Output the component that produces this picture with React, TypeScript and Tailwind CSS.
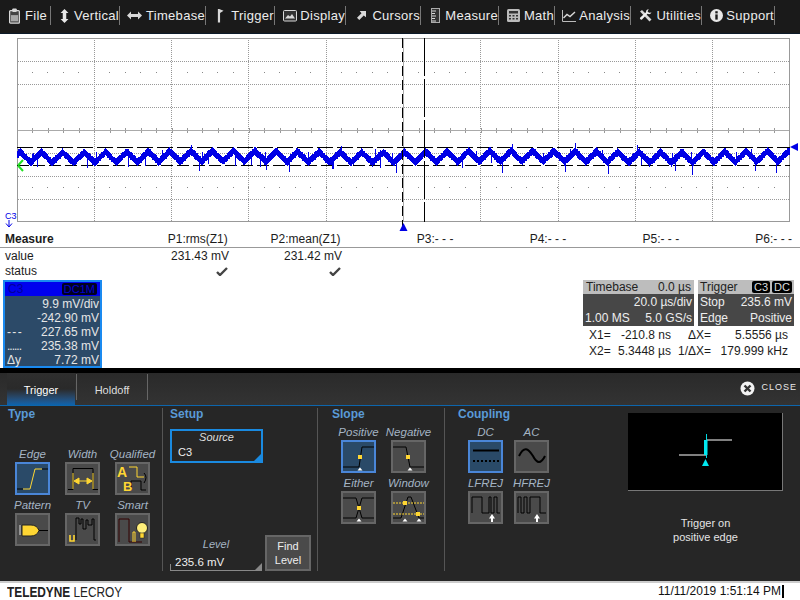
import type { ReactNode } from "react";

const rand = (n: number) => {
  const v = Math.sin(n * 12.9898) * 43758.5453;
  return v - Math.floor(v);
};

function tracePath() {
  let d = "";
  for (let x = 17; x <= 789; x += 1) {
    const period = 21.35;
    const p = (((x - 41) % period) + period) % period;
    const tri = p < period / 2 ? p / (period / 2) : 2 - p / (period / 2);
    const drift = Math.sin(x / 47) * 0.7;
    const mid = 151.5 + tri * 10.5 + drift;
    let top = mid - 3.2 - rand(x) * 1.2;
    let bot = mid + 3.2 + rand(x + 900) * 1.2;
    if (rand(x + 300) > 0.975) bot += 5 + rand(x + 50) * 5;
    if (rand(x + 600) > 0.98) top -= 3 + rand(x + 70) * 3;
    d += `M${x + 0.5} ${top.toFixed(0)}V${bot.toFixed(0)}`;
  }
  return d;
}

function Screen() {
  const vx = [94, 171, 248, 326, 480, 558, 635, 712];
  const hy = [61, 84, 107, 153, 176, 199];
  const dots: ReactNode[] = [];
  for (const y of [72, 187]) {
    for (let i = 0; i < 50; i++) {
      const x = 32 + i * 15.45;
      dots.push(<rect key={`${y}-${i}`} x={Math.round(x)} y={y} width="1" height="1" fill="#888" />);
    }
  }
  const ticks: ReactNode[] = [];
  for (let i = 0; i < 50; i++) {
    const x = Math.round(17 + i * 15.45);
    ticks.push(<rect key={i} x={x} y={128} width="1" height="5" fill="#999" />);
  }
  return (
    <svg width="800" height="198" viewBox="0 34 800 198" className="block shrink-0" shapeRendering="crispEdges">
      {hy.map((y) => (
        <line key={y} x1="18" x2="789" y1={y + 0.5} y2={y + 0.5} stroke="#999" strokeDasharray="1 1" />
      ))}
      {vx.map((x) => (
        <line key={x} x1={x + 0.5} x2={x + 0.5} y1="38" y2="221" stroke="#999" strokeDasharray="1 1" />
      ))}
      {dots}
      {ticks}
      <line x1="18" x2="789" y1="130.5" y2="130.5" stroke="#aaa" />
      <line x1="403.5" x2="403.5" y1="38" y2="221" stroke="#aaa" />
      <rect x="17.5" y="38.5" width="772" height="183" fill="none" stroke="#999" />
      <line x1="17" x2="790" y1="147.5" y2="147.5" stroke="#000" strokeDasharray="16 4" />
      <line x1="17" x2="790" y1="165.5" y2="165.5" stroke="#000" strokeDasharray="12 4" />
      <path d={tracePath()} stroke="#0000e6" strokeWidth="1" fill="none" />
      <line x1="402.5" x2="402.5" y1="38" y2="226" stroke="#000" strokeDasharray="10 4" />
      <line x1="424.5" x2="424.5" y1="38" y2="222" stroke="#000" strokeDasharray="38 3" />
      <path d="M18 165.5L23 160M18 165.5L23 171" stroke="#22e022" strokeWidth="2" fill="none" shapeRendering="auto" />
      <path d="M790 147L798 143V151Z" fill="#0000e6" shapeRendering="auto" />
      <path d="M403.5 223L407.5 231H399.5Z" fill="#0000e6" shapeRendering="auto" />
      <text x="5" y="219" fontSize="9" fill="#0000e6" fontFamily="Liberation Sans">C3</text>
      <path d="M9 220V226M6 223.5L9 227L12 223.5" stroke="#0000e6" fill="none" shapeRendering="auto" />
    </svg>
  );
}

function MenuIcon({ name }: { name: string }) {
  const c = "#d8d8d8";
  switch (name) {
    case "File":
      return (
        <svg width="13" height="16" viewBox="0 0 14 18">
          <rect x="1.5" y="3" width="11" height="14" rx="1" fill="#444" stroke={c} strokeWidth="1.4" />
          <rect x="3" y="8" width="8" height="7" fill="#a8a8a8" />
          <rect x="4.5" y="0.5" width="5" height="4" rx="1" fill={c} />
        </svg>
      );
    case "Vertical":
      return (
        <svg width="9" height="14" viewBox="0 0 10 16">
          <path d="M5 0L9.5 4.5H7V11.5H9.5L5 16L0.5 11.5H3V4.5H0.5Z" fill="#e8e8e8" />
        </svg>
      );
    case "Timebase":
      return (
        <svg width="15" height="9" viewBox="0 0 15 9">
          <path d="M0 4.5L4 0.5V3H11V0.5L15 4.5L11 8.5V6H4V8.5Z" fill={c} />
        </svg>
      );
    case "Trigger":
      return (
        <svg width="7" height="14" viewBox="0 0 8 16">
          <path d="M1 0H2.5L7.5 2L3.5 4.5V15.5H1Z" fill={c} />
        </svg>
      );
    case "Display":
      return (
        <svg width="14" height="12" viewBox="0 0 14 12">
          <rect x="0.5" y="0.5" width="13" height="10.5" rx="1" fill="#333" stroke={c} />
          <path d="M2 8.5L5 5L7 6.5L9 4L12 8.5Z" fill={c} />
        </svg>
      );
    case "Cursors":
      return (
        <svg width="9" height="9" viewBox="0 0 10 10">
          <path d="M10 0V7L7.5 5L2.5 10L0 7.5L5 2.5L3 0Z" fill={c} />
        </svg>
      );
    case "Measure":
      return (
        <svg width="9" height="15" viewBox="0 0 9 15">
          <rect x="0.5" y="0.5" width="8" height="14" fill="#333" stroke="#aaa" />
          <path d="M1 3H5M1 5.5H4M1 8H5M1 10.5H4M1 13H5" stroke={c} />
        </svg>
      );
    case "Math":
      return (
        <svg width="13" height="13" viewBox="0 0 13 13">
          <rect width="13" height="13" rx="1.5" fill="#bbb" />
          <rect x="2" y="2" width="9" height="2.5" fill="#333" />
          <path d="M2 6H4V7.5H2ZM5.5 6H7.5V7.5H5.5ZM9 6H11V7.5H9ZM2 9H4V10.5H2ZM5.5 9H7.5V10.5H5.5ZM9 9H11V10.5H9Z" fill="#333" />
        </svg>
      );
    case "Analysis":
      return (
        <svg width="14" height="12" viewBox="0 0 14 12">
          <path d="M0.5 0V11.5H14" stroke="#bbb" fill="none" />
          <path d="M1.5 8L5 4.5L8 6.5L13 2" stroke={c} strokeWidth="1.4" fill="none" />
        </svg>
      );
    case "Utilities":
      return (
        <svg width="13" height="13" viewBox="0 0 13 13">
          <path d="M1 2.5L3 1L12.5 10.5L10.5 12.5Z" fill={c} />
          <path d="M12.5 3.5A3 3 0 0 1 8.5 4.8L3 10.5A1.4 1.4 0 0 1 1 8.8L7 3.2A3 3 0 0 1 9.8 0.2L8.5 2.2L10 3.8Z" fill="#eee" />
        </svg>
      );
    default:
      return (
        <svg width="13" height="13" viewBox="0 0 13 13">
          <circle cx="6.5" cy="6.5" r="6.5" fill="#e8e8e8" />
          <rect x="5.3" y="2.2" width="2.4" height="2.2" fill="#1a1a1a" />
          <rect x="5.3" y="5.4" width="2.4" height="5.2" fill="#1a1a1a" />
        </svg>
      );
  }
}

const menuItems: [string, string, string][] = [
  ["File", "w-[51px] pl-[7px]", "w-[15px]"],
  ["Vertical", "w-[69px] pl-[7px]", "w-[18px]"],
  ["Timebase", "w-[86px] pl-[6px]", "w-[19px]"],
  ["Trigger", "w-[69px] pl-[6px]", "w-[20px]"],
  ["Display", "w-[71px] pl-[7px]", "w-[19px]"],
  ["Cursors", "w-[75px] pl-[8px]", "w-[17px]"],
  ["Measure", "w-[78px] pl-[8px]", "w-[18px]"],
  ["Math", "w-[56px] pl-[7px]", "w-[19px]"],
  ["Analysis", "w-[76px] pl-[7px]", "w-[19px]"],
  ["Utilities", "w-[71px] pl-[7px]", "w-[19px]"],
  ["Support", "w-[73px] pl-[7px]", "w-[19px]"],
];

function MenuBar() {
  return (
    <div className="flex h-[34px] shrink-0 items-center bg-[#1a1a1a] border-b border-[#0c1a28] pb-[2px]">
      {menuItems.map(([name, cls, iconCls]) => (
        <div key={name} className={`flex h-[19px] items-center border-r border-[#777] ${cls}`}>
          <span className={`flex justify-center mr-[3px] ${iconCls}`}>
            <MenuIcon name={name} />
          </span>
          <span className="text-[13px] tracking-[0.3px] text-[#ececec]">{name}</span>
        </div>
      ))}
    </div>
  );
}

function Check() {
  return (
    <svg width="12" height="9" viewBox="0 0 12 9">
      <path d="M1 5L4 8L11 1" stroke="#444" strokeWidth="2.4" fill="none" />
    </svg>
  );
}

function MeasureTable() {
  const cols = ["P1:rms(Z1)", "P2:mean(Z1)", "P3:- - -", "P4:- - -", "P5:- - -", "P6:- - -"];
  return (
    <div className="shrink-0 text-[12px] leading-[15px] text-[#1c1c1c]">
      <div className="flex h-[16px] border-b border-[#999] pr-[8px]">
        <div className="w-[115px] pl-[5px] font-bold">Measure</div>
        {cols.map((c) => (
          <div key={c} className="w-[113px] text-right">{c}</div>
        ))}
      </div>
      <div className="flex h-[16px] items-center">
        <div className="w-[115px] pl-[5px]">value</div>
        <div className="w-[114px] text-right">231.43 mV</div>
        <div className="w-[113px] text-right">231.42 mV</div>
      </div>
      <div className="flex h-[15px] items-center">
        <div className="w-[115px] pl-[5px]">status</div>
        <div className="flex w-[113px] justify-end"><Check /></div>
        <div className="flex w-[113px] justify-end"><Check /></div>
      </div>
    </div>
  );
}

function Pill({ children }: { children: ReactNode }) {
  return <span className="rounded-[2px] bg-black px-[2px] leading-[12px] text-[11px] text-[#ddd]">{children}</span>;
}

function ChannelBox() {
  const rows: [ReactNode, string][] = [
    ["", "9.9 mV/div"],
    ["", "-242.90 mV"],
    [<span key="a" className="tracking-[-1px]">- - -</span>, "227.65 mV"],
    [<span key="b" className="tracking-[-1px]">......</span>, "235.38 mV"],
    ["Δy", "7.72 mV"],
  ];
  return (
    <div className="ml-[3px] h-[88px] w-[99px] border-2 border-[#1a8af0] bg-[#2c4a68] text-[12px] text-[#e6e6e6]">
      <div className="flex h-[14px] items-center justify-between bg-[#0000ee] pl-[3px] pr-[3px] text-[#00009a]">
        <span>C3</span>
        <span className="rounded-[2px] bg-[#000020] px-[2px] text-[11px] leading-[12px] text-[#0000d0]">DC1M</span>
      </div>
      <div className="pt-[1px]">
        {rows.map(([l, v], i) => (
          <div key={i} className="flex h-[14px] items-center justify-between pl-[2px] pr-[1px] leading-[14px]">
            <span>{l}</span>
            <span>{v}</span>
          </div>
        ))}
      </div>
    </div>
  );
}

function InfoBoxes() {
  return (
    <div className="w-[211px] text-[12px]">
      <div className="flex justify-between">
        <div className="w-[111px]">
          <div className="flex h-[14px] items-center justify-between bg-[#bdbdbd] px-[3px] text-[#222]">
            <span>Timebase</span>
            <span>0.0 µs</span>
          </div>
          <div className="h-[32px] bg-[#474747] px-[2px] leading-[16px] text-[#eee]">
            <div className="text-right">20.0 µs/div</div>
            <div className="flex justify-between"><span>1.00 MS</span><span>5.0 GS/s</span></div>
          </div>
        </div>
        <div className="w-[96px]">
          <div className="flex h-[14px] items-center justify-between bg-[#bdbdbd] px-[2px] text-[#222]">
            <span>Trigger</span>
            <span className="flex gap-[2px]"><Pill>C3</Pill><Pill>DC</Pill></span>
          </div>
          <div className="h-[32px] bg-[#474747] px-[2px] leading-[16px] text-[#eee]">
            <div className="flex justify-between"><span>Stop</span><span>235.6 mV</span></div>
            <div className="flex justify-between"><span>Edge</span><span>Positive</span></div>
          </div>
        </div>
      </div>
      <div className="grid grid-cols-[22px_60px_40px_77px] pl-[6px] pt-[1px] leading-[16px] text-[#1c1c1c]">
        <span>X1=</span>
        <span className="text-right">-210.8 ns</span>
        <span className="text-right">ΔX=</span>
        <span className="text-right">5.5556 µs</span>
        <span>X2=</span>
        <span className="text-right">5.3448 µs</span>
        <span className="text-right">1/ΔX=</span>
        <span className="text-right">179.999 kHz</span>
      </div>
    </div>
  );
}

function IconBtn({ label, active, children }: { label: string; active?: boolean; children: ReactNode }) {
  return (
    <div className="flex h-[51px] w-[35px] flex-col items-center">
      <div className="h-[18px] whitespace-nowrap text-[11.5px] italic leading-[20px] text-[#a4b4c4]">{label}</div>
      <div className={`h-[33px] w-[35px] border-2 ${active ? "border-[#4a86d8] bg-[#2a4a68]" : "border-[#666] bg-[#4a4a4a]"}`}>
        <svg width="31" height="29" viewBox="0 0 31 29" className="block overflow-visible">
          {children}
        </svg>
      </div>
    </div>
  );
}

const Y = "#ffd633";
const mark = (x: number, y: number) => <rect x={x - 2} y={y - 2} width="4" height="4" fill={Y} />;
const tri = (x: number) => <path d={`M${x} 25.5L${x + 2.5} 28.5H${x - 2.5}Z`} fill="#fff" />;
const rejArrow = (x: number) => <path d={`M${x} 21L${x + 3} 25.5H${x + 1}V29H${x - 1}V25.5H${x - 3}Z`} fill="#fff" />;

function TypeGrid() {
  return (
    <div className="mt-[24px] grid w-[162px] grid-cols-[35px_35px_35px] gap-x-[15px] pl-[15px]">
      <IconBtn label="Edge" active>
        <path d="M0 25H6" stroke="#000" strokeWidth="1" fill="none" />
        <path d="M6 25H13L18 5H25" stroke={Y} fill="none" />
        <path d="M25 5H31" stroke="#000" fill="none" />
      </IconBtn>
      <IconBtn label="Width">
        <path d="M1 25.5H6V4.5H26V25.5H31" stroke="#000" fill="none" />
        <path d="M6 9V25M26 9V25" stroke={Y} fill="none" />
        <path d="M7 17L12 14V20ZM25 17L20 14V20Z M12 17H20" fill={Y} stroke={Y} />
      </IconBtn>
      <IconBtn label="Qualified">
        <path d="M12 3H20V13H27" stroke={Y} fill="none" />
        <path d="M14 26V17H24V26H29" stroke="#000" fill="none" />
        <path d="M27 9Q31 13 27 19" stroke="#000" fill="none" />
        <text x="0" y="13" fontSize="14" fontWeight="bold" fill={Y} fontFamily="Liberation Sans">A</text>
        <text x="6" y="27" fontSize="13" fontWeight="bold" fill={Y} fontFamily="Liberation Sans">B</text>
      </IconBtn>
      <IconBtn label="Pattern">
        <path d="M2 11H4M2 13H4M2 15H4M2 17H4M2 19H4" stroke="#ddd" />
        <path d="M5 10H14Q20 10 22 15.5Q20 21 14 21H5Z" fill={Y} stroke="#222" />
        <path d="M22 15.5H31" stroke="#000" />
      </IconBtn>
      <IconBtn label="TV">
        <path d="M9 25V3H12V9H14V4H16V14H19V5H21V10H25V4H27V25H29" stroke="#000" fill="none" />
        <path d="M3 20V26H7V20" stroke={Y} strokeWidth="1.6" fill="none" />
      </IconBtn>
      <IconBtn label="Smart">
        <path d="M2 27V4H12V27H25" stroke="#300" fill="none" />
        <path d="M16 27V17H18V27" stroke={Y} fill="none" />
        <circle cx="25" cy="13" r="5.5" fill="#ffef7a" stroke="#222" />
        <rect x="23" y="18" width="4" height="5" fill={Y} stroke="#222" strokeWidth="0.5" />
      </IconBtn>
    </div>
  );
}

function SlopeGrid() {
  return (
    <div className="mt-[2px] grid w-[100px] grid-cols-[35px_35px] gap-x-[15px] pl-[18px]">
      <IconBtn label="Positive" active>
        <path d="M0 25H16L19 5H31" stroke="#000" fill="none" />
        {mark(17, 15)}
        {tri(17)}
      </IconBtn>
      <IconBtn label="Negative">
        <path d="M0 5H13L17 25H31" stroke="#000" fill="none" />
        {mark(15, 15)}
        {tri(17)}
      </IconBtn>
      <IconBtn label="Either">
        <path d="M0 5H13L16 15L13 25H0M31 5H19L16 15L19 25H31" stroke="#000" fill="none" />
        {mark(16, 15)}
        {tri(16)}
      </IconBtn>
      <IconBtn label="Window">
        <path d="M0 25H8L15 4H18L26 25H31" stroke="#000" fill="none" />
        <path d="M0 10H31M0 21H31" stroke={Y} strokeDasharray="2 1" />
        {mark(12, 10)}
        {mark(25, 21)}
        {tri(12)}
        {tri(26)}
      </IconBtn>
    </div>
  );
}

function CouplingGrid() {
  return (
    <div className="mt-[2px] grid w-[102px] grid-cols-[35px_35px] gap-x-[11px] pl-[21px]">
      <IconBtn label="DC" active>
        <path d="M3 8.5H29" stroke="#000" strokeWidth="2" />
        <path d="M3 19H29" stroke="#000" strokeWidth="2" strokeDasharray="2 2" />
      </IconBtn>
      <IconBtn label="AC">
        <path d="M3 14C8 4 12 6 17 14C21 22 25 22 29 14" stroke="#000" strokeWidth="2" fill="none" />
      </IconBtn>
      <IconBtn label="LFREJ">
        <path d="M2 20V4H12V20H19V4H21V20H24V4H27V20H30" stroke="#000" fill="none" />
        {rejArrow(22)}
      </IconBtn>
      <IconBtn label="HFREJ">
        <path d="M2 20V4H5V20H8V4H11V20H14V4H24V20H30" stroke="#000" fill="none" />
        {rejArrow(21)}
      </IconBtn>
    </div>
  );
}

function Heading({ children }: { children: ReactNode }) {
  return <div className="text-[12px] font-bold leading-[12px] text-[#5a9ad6]">{children}</div>;
}

function TriggerPanel() {
  return (
    <div className="flex h-[208px] shrink-0 flex-col bg-[#262626]">
      <div className="flex h-[33px] items-stretch border-b border-[#0d66ad] bg-gradient-to-b from-[#2a2a2a] to-[#333333] pl-[7px]">
        <div className="flex w-[68px] items-start justify-center bg-gradient-to-b from-[#2e2e2e] via-[#2a2a2a] to-[#0a63ad] pt-[9px] text-[11px] text-white">
          Trigger
        </div>
        <div className="my-[1px] h-[26px] border-r border-[#666] pl-[1px]" />
        <div className="w-[70px] pt-[9px] text-center text-[11px] text-[#ddd]">Holdoff</div>
        <div className="my-[1px] h-[26px] border-r border-[#666]" />
        <div className="ml-auto flex items-center gap-[6px] pb-[2px] pr-[3px]">
          <svg width="15" height="15" viewBox="0 0 15 15">
            <circle cx="7.5" cy="7.5" r="7" fill="#f2f2f2" />
            <path d="M4.5 4.5L10.5 10.5M10.5 4.5L4.5 10.5" stroke="#333" strokeWidth="2.4" />
          </svg>
          <span className="text-[9px] tracking-[1px] text-[#e8e8e8]">CLOSE</span>
        </div>
      </div>
      <div className="flex flex-1 items-start pt-[2px]">
        <div className="h-[163px] w-[163px] border-r border-[#555]">
          <div className="pl-[8px]"><Heading>Type</Heading></div>
          <TypeGrid />
        </div>
        <div className="flex h-[163px] w-[155px] flex-col border-r border-[#555] pl-[7px]">
          <Heading>Setup</Heading>
          <div className="relative mt-[9px] h-[36px] w-[93px] border-2 border-[#1a8ae0] text-[11px] text-[#ddd]">
            <div className="text-center italic leading-[13px]">Source</div>
            <div className="pl-[6px] leading-[16px] text-[#eee]">C3</div>
            <span className="absolute bottom-0 right-0 h-0 w-0 border-b-[7px] border-l-[7px] border-b-[#1a8ae0] border-l-transparent" />
          </div>
          <div className="mt-[71px] flex items-end">
            <div className="relative w-[92px] border-b border-[#888]">
              <div className="pt-[2px] text-center text-[11px] italic leading-[16px] text-[#a4b4c4]">Level</div>
              <div className="pl-[5px] pt-[2px] text-[11.5px] leading-[16px] text-[#eee]">235.6 mV</div>
              <span className="absolute bottom-0 left-0 h-[6px] w-px bg-[#888]" />
              <span className="absolute bottom-0 right-0 h-0 w-0 border-b-[7px] border-l-[7px] border-b-[#888] border-l-transparent" />
            </div>
            <div className="ml-[3px] flex h-[36px] w-[46px] flex-col items-center justify-center border-2 border-[#666] bg-[#4a4a4a] text-[11px] leading-[14px] text-[#eee]">
              <span>Find</span>
              <span>Level</span>
            </div>
          </div>
        </div>
        <div className="h-[163px] w-[127px] border-r border-[#555] pl-[5px]">
          <div className="pl-[9px]"><Heading>Slope</Heading></div>
          <SlopeGrid />
        </div>
        <div className="h-[163px] w-[155px] pl-[2px]">
          <div className="pl-[11px]"><Heading>Coupling</Heading></div>
          <CouplingGrid />
        </div>
        <div className="ml-[28px] flex w-[155px] flex-col items-center pt-[5px]">
          <div className="h-[78px] w-[155px] border-b border-r border-[#777] bg-black">
            <svg width="154" height="77" viewBox="0 0 154 77" className="block">
              <path d="M51 42H78M78 27H104" stroke="#fff" strokeWidth="1" />
              <path d="M78.5 21V45" stroke="#00d8e0" />
              <rect x="76" y="27" width="3.5" height="15" fill="#00e8f0" />
              <path d="M77.5 46L81 53H74Z" fill="#00e8f0" />
            </svg>
          </div>
          <div className="mt-[25px] text-center text-[11px] leading-[14px] text-[#e4e4e4]">
            Trigger on
            <br />
            positive edge
          </div>
        </div>
      </div>
    </div>
  );
}

function Footer() {
  return (
    <div className="flex h-[18px] shrink-0 items-center justify-between border-t-2 border-[#ccc] bg-white pl-[7px]">
      <div className="origin-left scale-x-[0.79] text-[15px] leading-[15px] text-[#222]">
        <span className="font-bold">TELEDYNE</span> <span>LECROY</span>
      </div>
      <div className="flex items-center pr-[16px] text-[12px] text-[#111]">
        <span>11/11/2019 1:51:14 PM</span>
        <span className="ml-[1px] h-[13px] w-[2px] bg-black" />
      </div>
    </div>
  );
}

export default function App() {
  return (
    <div className="flex h-[600px] w-[800px] flex-col overflow-hidden bg-white font-['Liberation_Sans',sans-serif]">
      <MenuBar />
      <Screen />
      <MeasureTable />
      <div className="flex h-[89px] shrink-0 items-start justify-between pr-[6px] pt-[1px]">
        <ChannelBox />
        <InfoBoxes />
      </div>
      <div className="h-[5px] shrink-0 bg-black" />
      <TriggerPanel />
      <Footer />
    </div>
  );
}
